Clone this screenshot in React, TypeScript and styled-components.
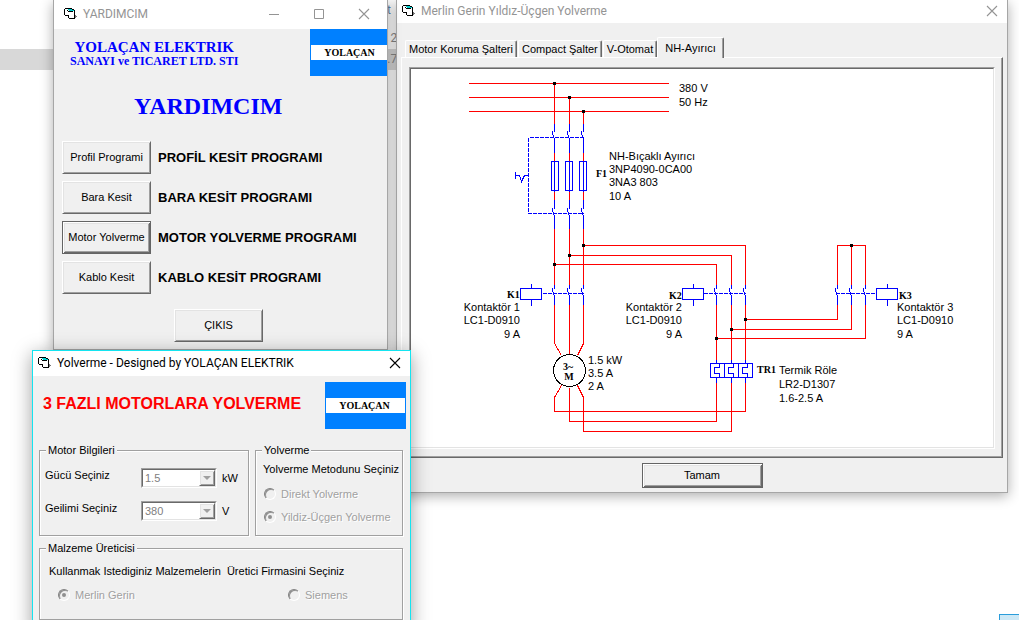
import React from 'react';
import styled, { createGlobalStyle, css } from 'styled-components';

const face = '#f0f0f0';
const uiFont = '"Liberation Sans", Arial, sans-serif';
const titleFont = 'Roboto, "Open Sans", sans-serif';
const serifFont = '"Liberation Serif", "Times New Roman", serif';

const GlobalStyle = createGlobalStyle`
  * { box-sizing: border-box; }
  body {
    margin: 0;
    background: #fff;
    color: #000;
    font: 11px/14px ${uiFont};
  }
  button, select, input { font: inherit; color: inherit; }
`;

const raised = css`
  border: 1px solid;
  border-color: #fff #696969 #696969 #fff;
  box-shadow: inset 1px 1px 0 #e3e3e3, inset -1px -1px 0 #a0a0a0;
`;

const Desktop = styled.main`
  position: relative;
  height: 100vh;
  overflow: hidden;
`;

/* file list behind the windows */
const FileList = styled.ul`
  width: 404px;
  margin: 0;
  padding: 0;
  list-style: none;
  font: 12px/21px ${titleFont};
  color: #8a8a8a;
`;

const FileRow = styled.li<{ $selected?: boolean; $head?: boolean }>`
  height: ${p => (p.$head ? 28 : 21)}px;
  padding-right: ${p => (p.$head ? 13 : 0)}px;
  overflow: hidden;
  text-align: right;
  color: ${p => (p.$head ? '#5f84a8' : 'inherit')};
  background: ${p => (p.$selected ? '#d8d8d8' : 'transparent')};
`;

const TrayBox = styled.div`
  position: absolute;
  right: 0;
  bottom: 0;
  width: 20px;
  height: 6px;
  border: 1px solid #2a9ddb;
  border-width: 1px 0 0 1px;
  background: #cce8f6;
`;

const Window = styled.section<{ $active?: boolean }>`
  position: absolute;
  border: 1px solid ${p => (p.$active ? '#14e4f0' : '#a6a6a6')};
  background: ${face};
  overflow: hidden;
  box-shadow: ${p =>
    p.$active ? '0 4px 18px rgba(0,0,0,.38)' : '0 3px 12px rgba(0,0,0,.32)'};
`;

const MenuWindow = styled(Window)`
  left: 53px;
  top: 0;
  width: 335px;
  border-top: 0;
`;

const SchemaWindow = styled(Window)`
  left: 396px;
  right: 11px;
  top: 0;
  min-width: 612px;
  border-top: 0;
`;

const StarterWindow = styled(Window)`
  left: 32px;
  top: 350px;
  width: 379px;
`;

const TitleBar = styled.header<{ $height: number; $active?: boolean }>`
  display: flex;
  align-items: center;
  height: ${p => p.$height}px;
  padding: 0 9px 2px 5px;
  gap: 6px;
  background: #fff;
  color: ${p => (p.$active ? '#000' : '#949494')};
`;

const MenuTitleBar = styled(TitleBar)`
  padding-left: 10px;
  padding-right: 17px;
`;

const Title = styled.h1`
  flex: 1;
  margin: 0;
  font: 12px/16px ${titleFont};
  white-space: nowrap;
`;

const Captions = styled.div`
  display: flex;
  gap: 33px;
`;

const CaptionButton = styled.button`
  display: block;
  width: 12px;
  height: 12px;
  padding: 0;
  border: 0;
  background: none;
`;

const Logo = styled.div`
  display: flex;
  flex-direction: column;
  justify-content: center;
  flex: none;
  width: 81px;
  height: 47px;
  background: #0080ff;
`;

const LogoName = styled.span`
  margin: 0 1px;
  padding-right: 2px;
  background: #fff;
  font: bold 10px/15px ${serifFont};
  text-align: center;
`;

const MenuHead = styled.div`
  display: flex;
  justify-content: space-between;
  padding-left: 16px;
  margin-right: -4px;
`;

const Company = styled.p`
  margin: 0;
  padding-top: 10px;
  color: #00f;
  font: bold 12px/12px ${serifFont};
  text-align: center;
`;

const CompanyName = styled.span`
  display: block;
  font-size: 15px;
  line-height: 16px;
`;

const MenuHeading = styled.h2`
  margin: 16px 0 21px;
  padding-left: 80px;
  color: #00f;
  font: bold 24px/28px ${serifFont};
`;

const ProgramList = styled.ul`
  display: flex;
  flex-direction: column;
  gap: 7px;
  margin: 0;
  padding: 0 8px;
  list-style: none;
`;

const ProgramRow = styled.li`
  display: flex;
  align-items: center;
  gap: 7px;
  font: bold 13px/16px ${uiFont};
`;

const PushButton = styled.button<{ $default?: boolean }>`
  ${raised}
  width: 89px;
  height: 33px;
  padding: 0 0 2px;
  background: ${face};
  font: 11px/14px ${uiFont};
  white-space: nowrap;
  ${p =>
    p.$default &&
    css`
      border-color: #646464;
      box-shadow: inset 1px 1px 0 #fff, inset -1px -1px 0 #696969,
        inset 2px 2px 0 #e3e3e3, inset -2px -2px 0 #a0a0a0;
    `}
`;

const ExitRow = styled.div`
  padding: 15px 0 7px 120px;
`;

const StarterHead = styled.div`
  display: flex;
  align-items: center;
  justify-content: space-between;
  padding: 6px 4px 0 10px;
`;

const StarterHeading = styled.h2`
  margin: 0;
  padding-bottom: 4px;
  color: #f00;
  font: bold 16px/20px ${uiFont};
  white-space: nowrap;
`;

const StarterForm = styled.form`
  display: grid;
  grid-template-columns: 210px 1fr;
  gap: 6px;
  padding: 15px 7px 12px 6px;
`;

const Frame = styled.fieldset<{ $wide?: boolean }>`
  grid-column: ${p => (p.$wide ? '1 / -1' : 'auto')};
  min-width: 0;
  margin: 0;
  padding: 5px 5px 7px 7px;
  border: 1px solid #a0a0a0;
  box-shadow: 1px 1px 0 #fff, inset 1px 1px 0 #fff;
`;

const MakerFrame = styled(Frame)`
  padding: 9px 9px 13px;
`;

const Legend = styled.legend<{ $pull?: number }>`
  margin-left: ${p => p.$pull ?? -1}px;
  padding: 0 2px;
  background: ${face};
  line-height: 13px;
`;

const FieldGrid = styled.div`
  display: grid;
  grid-template-columns: 96px 76px auto;
  row-gap: 12px;
  padding: 6px 0 5px;
  margin-left: -2px;
`;

const Unit = styled.span`
  padding-left: 5px;
  line-height: 21px;
`;

const SelectWrap = styled.span`
  position: relative;
  display: block;
  height: 20px;
  border: 1px solid;
  border-color: #a0a0a0 #fff #fff #a0a0a0;
`;

const Select = styled.select`
  appearance: none;
  display: block;
  width: 100%;
  height: 18px;
  padding: 0 18px 0 2px;
  border: 1px solid;
  border-color: #696969 #e3e3e3 #e3e3e3 #696969;
  border-radius: 0;
  background: #fff;
  opacity: 1;
  color: #808080;
`;

const DropArrow = styled.span`
  ${raised}
  position: absolute;
  top: 1px;
  right: 1px;
  bottom: 1px;
  display: flex;
  align-items: center;
  justify-content: center;
  width: 16px;
  background: ${face};
  pointer-events: none;
  &::after {
    content: '';
    border: 4px solid transparent;
    border-top-color: #a0a0a0;
    border-bottom: 0;
  }
`;

const Choices = styled.div<{ $columns?: boolean }>`
  display: grid;
  grid-template-columns: ${p => (p.$columns ? '230px auto' : 'auto')};
  margin: ${p => (p.$columns ? '5px 0 0 9px' : '6px 0 0 1px')};
`;

const Choice = styled.label`
  display: flex;
  align-items: center;
  gap: 5px;
  height: 23px;
  color: #a0a0a0;
  text-shadow: 1px 1px 0 #fff;
  white-space: nowrap;
`;

const Radio = styled.input`
  appearance: none;
  display: grid;
  place-items: center;
  width: 12px;
  height: 12px;
  margin: 0;
  border: 1px solid;
  border-color: #808080 #fff #fff #808080;
  border-radius: 50%;
  background: ${face};
  box-shadow: inset 1px 1px 0 #909090;
  &:checked::after {
    content: '';
    width: 4px;
    height: 4px;
    border-radius: 50%;
    background: #909090;
  }
`;

const Prompt = styled.p`
  margin: 0;
  white-space: pre;
`;

const SchemaBody = styled.div`
  display: flex;
  flex-direction: column;
  padding: 14px 4px 4px;
`;

const TabStrip = styled.div`
  display: flex;
  align-items: flex-end;
  gap: 1px;
  padding-left: 4px;
`;

const Tab = styled.button<{ $selected?: boolean }>`
  height: 17px;
  padding: 0 3px;
  border: 1px solid;
  border-color: #fff #696969 transparent #fff;
  border-bottom: 0;
  border-radius: 2px 2px 0 0;
  background: ${face};
  box-shadow: inset -1px 0 0 #a0a0a0;
  white-space: nowrap;
  ${p =>
    p.$selected &&
    css`
      position: relative;
      height: 21px;
      margin: 0 0 -1px -1px;
      padding: 0 7px;
    `}
`;

const TabPage = styled.div`
  padding: 9px 7px 8px;
  border: 1px solid;
  border-color: #fff #696969 #696969 #fff;
  box-shadow: inset -1px -1px 0 #a0a0a0;
`;

const Sheet = styled.div`
  border: 1px solid;
  border-color: #a0a0a0 #fff #fff #a0a0a0;
`;

const SheetInner = styled.div`
  border: 1px solid;
  border-color: #696969 #e3e3e3 #e3e3e3 #696969;
  background: #fff;
  overflow: hidden;
`;

const Drawing = styled.svg`
  display: block;
  text {
    font: 11px ${uiFont};
  }
  text.tag {
    font: bold 10px ${serifFont};
  }
`;

const OkButton = styled(PushButton)`
  align-self: center;
  width: 121px;
  height: 25px;
  margin-top: 5px;
`;

const FormIcon = () => (
  <svg width="13" height="12" viewBox="0 0 13 12" shapeRendering="crispEdges" aria-hidden="true">
    <path d="M1 1h2v1h7v8H5V7H1z" fill="#fff" />
    <path d="M4 1h5v1h1v1H5V2H4z" fill="#0cc" />
    <path
      d="M0 1h1v6H0zM1 0h3v1H1zM4 0h4v1H4zM8 1h2v1H8zM3 2h1v1H3zM4 3h5v1H4zM1 7h3v1H1zM4 7h1v3H4zM5 10h5v1H5zM10 2h1v9h-1z"
      fill="#000"
    />
    <path d="M11 7h1v1h1v1h-1v1h-1z" fill="#777" />
  </svg>
);

const CloseGlyph = () => (
  <svg width="12" height="12" viewBox="0 0 12 12" aria-hidden="true">
    <path d="M1 1L11 11M11 1L1 11" stroke="currentColor" strokeWidth="1.1" />
  </svg>
);

const Brand = () => (
  <Logo>
    <LogoName>YOLAÇAN</LogoName>
  </Logo>
);

/* One switch pole: fixed contact, blade, lower lead */
const pole = (x: number, top: number, bladeAt: number, bottom: number) =>
  `M${x} ${top}V${bladeAt}M${x - 2} ${bladeAt - 1}v3L${x} ${bladeAt + 8}V${bottom}`;

const feeders = [554, 569, 583];
const fuseLeft = [551, 565, 579];
const deltaPoles = [716, 731, 745];
const starPoles = [837, 851, 865];
const nodes = [
  [554, 83], [569, 97], [583, 111], [583, 245], [569, 255], [554, 264],
  [745, 319], [731, 329], [716, 338], [851, 245],
];

const Coil = ({ x }: { x: number }) => (
  <path d={`M${x} 288h21v11h-21zM${x + 11} 283v5M${x + 11} 299v6`} />
);

const Wiring = () => (
  <Drawing
    width="582"
    height="378"
    viewBox="411 69 582 378"
    role="img"
    aria-label="Yıldız-Üçgen Yolverme"
  >
    <g transform="translate(0.5 0.5)" fill="none" shapeRendering="crispEdges">
      <g stroke="#f00">
        <path d="M468 83H668M468 97H668M468 111H668" />
        <path d="M554 83V123M569 97V123M583 111V123" />
        {feeders.map(x => (
          <path key={x} d={`M${x} 152V161M${x} 191V199M${x} 228V284`} />
        ))}
        <path d="M554 304V343L561 355M569 304V353M583 304V343L577 355" />
        <path d="M561 385L554 397V411H745V382M569 387V421H716V382M577 385L583 397V431H731V382" />
        <path d="M583 245H745V284M569 255H731V284M554 264H716V284" />
        <path d="M716 304V359M731 304V359M745 304V359" />
        <path d="M745 319H837V304M731 329H851V304M716 338H865V304" />
        <path d="M837 284V245H865V284M851 245V284" />
      </g>
      <g stroke="#00f">
        {feeders.map((x, i) => (
          <g key={x}>
            <path d={pole(x, 123, 131, 152)} />
            <path d={`M${fuseLeft[i]} 161h7v29h-7zM${x} 161v30`} />
            <path d={pole(x, 199, 208, 228)} />
          </g>
        ))}
        {[...feeders, ...deltaPoles, ...starPoles].map(x => (
          <path key={x} d={pole(x, 284, 288, 304)} />
        ))}
        <path
          d="M583 137H528V213H583M542 293H583M703 293H745M835 293H876"
          strokeDasharray="4 1"
        />
        <path d="M515 171V178M515 175H519L521 181L524 175H528" />
        <Coil x={520} />
        <Coil x={682} />
        <Coil x={876} />
        <path d="M710 363H752V377H710zM724 363V377M738 363V377" />
        {deltaPoles.map((x, i) => {
          const left = 714 + i * 14;
          return (
            <path
              key={x}
              d={`M${x} 359V363M${x} 377V382M${left + 5} 363V367H${left}V373H${left + 5}V377`}
            />
          );
        })}
      </g>
      <circle cx="569" cy="370" r="16" stroke="#000" />
      <g fill="#000">
        {nodes.map(([x, y]) => (
          <rect key={`${x}-${y}`} x={x - 1.5} y={y - 1.5} width="3" height="3" />
        ))}
      </g>
    </g>
    <g>
      <text x="679" y="92">380 V</text>
      <text x="679" y="106">50 Hz</text>
      <text x="609" y="160">NH-Bıçaklı Ayırıcı</text>
      <text x="609" y="173">3NP4090-0CA00</text>
      <text x="609" y="186">3NA3 803</text>
      <text x="609" y="200">10 A</text>
      <text x="588" y="364">1.5 kW</text>
      <text x="588" y="377">3.5 A</text>
      <text x="588" y="390">2 A</text>
      <text x="779" y="374">Termik Röle</text>
      <text x="779" y="388">LR2-D1307</text>
      <text x="779" y="402">1.6-2.5 A</text>
      <text x="897" y="311">Kontaktör 3</text>
      <text x="897" y="324">LC1-D0910</text>
      <text x="897" y="338">9 A</text>
    </g>
    <g textAnchor="end">
      <text x="520" y="311">Kontaktör 1</text>
      <text x="520" y="324">LC1-D0910</text>
      <text x="520" y="338">9 A</text>
      <text x="682" y="311">Kontaktör 2</text>
      <text x="682" y="324">LC1-D0910</text>
      <text x="682" y="338">9 A</text>
    </g>
    <g>
      <text className="tag" x="596" y="177">F1</text>
      <text className="tag" x="507" y="298">K1</text>
      <text className="tag" x="669" y="299">K2</text>
      <text className="tag" x="899" y="299">K3</text>
      <text className="tag" x="757" y="373">TR1</text>
      <text className="tag" x="568" y="370" textAnchor="middle">3~</text>
      <text className="tag" x="569" y="380" textAnchor="middle">M</text>
    </g>
  </Drawing>
);

const programs = [
  { button: 'Profil Programi', label: 'PROFİL KESİT PROGRAMI' },
  { button: 'Bara Kesit', label: 'BARA KESİT PROGRAMI' },
  { button: 'Motor Yolverme', label: 'MOTOR YOLVERME PROGRAMI', isDefault: true },
  { button: 'Kablo Kesit', label: 'KABLO KESİT PROGRAMI' },
];

const tabs = ['Motor Koruma Şalteri', 'Compact Şalter', 'V-Otomat', 'NH-Ayırıcı'];

interface ComboProps {
  id: string;
  label: string;
  value: string;
  unit: string;
}

const Combo = ({ id, label, value, unit }: ComboProps) => (
  <>
    <label htmlFor={id}>{label}</label>
    <SelectWrap>
      <Select id={id} disabled defaultValue={value}>
        <option>{value}</option>
      </Select>
      <DropArrow />
    </SelectWrap>
    <Unit>{unit}</Unit>
  </>
);

interface OptionProps {
  name: string;
  label: string;
  checked?: boolean;
}

const Option = ({ name, label, checked }: OptionProps) => (
  <Choice>
    <Radio type="radio" name={name} disabled defaultChecked={checked} />
    {label}
  </Choice>
);

export default function App() {
  return (
    <>
      <GlobalStyle />
      <Desktop>
        <FileList>
          <FileRow $head>t</FileRow>
          <FileRow>20</FileRow>
          <FileRow $selected>.72</FileRow>
        </FileList>
        <TrayBox />

        <SchemaWindow>
          <TitleBar $height={23}>
            <FormIcon />
            <Title>Merlin Gerin Yıldız-Üçgen Yolverme</Title>
            <CaptionButton aria-label="Kapat"><CloseGlyph /></CaptionButton>
          </TitleBar>
          <SchemaBody>
            <TabStrip role="tablist">
              {tabs.map((tab, i) => (
                <Tab key={tab} role="tab" aria-selected={i === 3} $selected={i === 3}>
                  {tab}
                </Tab>
              ))}
            </TabStrip>
            <TabPage role="tabpanel">
              <Sheet>
                <SheetInner>
                  <Wiring />
                </SheetInner>
              </Sheet>
            </TabPage>
            <OkButton $default>Tamam</OkButton>
          </SchemaBody>
        </SchemaWindow>

        <MenuWindow>
          <MenuTitleBar $height={29}>
            <FormIcon />
            <Title>YARDIMCIM</Title>
            <Captions>
              <CaptionButton aria-label="Simge durumuna küçült">
                <svg width="12" height="12" viewBox="0 0 12 12" aria-hidden="true">
                  <path d="M1 6.500H11" stroke="currentColor" />
                </svg>
              </CaptionButton>
              <CaptionButton aria-label="Ekranı kapla">
                <svg width="12" height="12" viewBox="0 0 12 12" aria-hidden="true">
                  <path d="M1.500 1.500H10.500V10.500H1.500z" fill="none" stroke="currentColor" />
                </svg>
              </CaptionButton>
              <CaptionButton aria-label="Kapat"><CloseGlyph /></CaptionButton>
            </Captions>
          </MenuTitleBar>
          <MenuHead>
            <Company>
              <CompanyName>YOLAÇAN ELEKTRIK</CompanyName>
              SANAYI ve TICARET LTD. STI
            </Company>
            <Brand />
          </MenuHead>
          <MenuHeading>YARDIMCIM</MenuHeading>
          <ProgramList>
            {programs.map(p => (
              <ProgramRow key={p.button}>
                <PushButton $default={p.isDefault}>{p.button}</PushButton>
                {p.label}
              </ProgramRow>
            ))}
          </ProgramList>
          <ExitRow>
            <PushButton>ÇIKIS</PushButton>
          </ExitRow>
        </MenuWindow>

        <StarterWindow $active>
          <TitleBar $height={25} $active>
            <FormIcon />
            <Title>Yolverme - Designed by YOLAÇAN ELEKTRIK</Title>
            <CaptionButton aria-label="Kapat"><CloseGlyph /></CaptionButton>
          </TitleBar>
          <StarterHead>
            <StarterHeading>3 FAZLI MOTORLARA YOLVERME</StarterHeading>
            <Brand />
          </StarterHead>
          <StarterForm>
            <Frame>
              <Legend>Motor Bilgileri</Legend>
              <FieldGrid>
                <Combo id="power" label="Gücü Seçiniz" value="1.5" unit="kW" />
                <Combo id="voltage" label="Geilimi Seçiniz" value="380" unit="V" />
              </FieldGrid>
            </Frame>
            <Frame>
              <Legend>Yolverme</Legend>
              <Prompt>Yolverme Metodunu Seçiniz</Prompt>
              <Choices>
                <Option name="method" label="Direkt Yolverme" />
                <Option name="method" label="Yildiz-Üçgen Yolverme" checked />
              </Choices>
            </Frame>
            <MakerFrame $wide>
              <Legend $pull={-3}>Malzeme Üreticisi</Legend>
              <Prompt>Kullanmak Istediginiz Malzemelerin  Üretici Firmasini Seçiniz</Prompt>
              <Choices $columns>
                <Option name="maker" label="Merlin Gerin" checked />
                <Option name="maker" label="Siemens" />
              </Choices>
            </MakerFrame>
          </StarterForm>
        </StarterWindow>
      </Desktop>
    </>
  );
}
